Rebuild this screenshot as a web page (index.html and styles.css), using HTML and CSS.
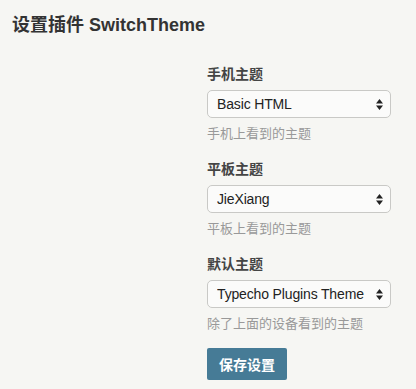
FILE: index.html
```html
<!DOCTYPE html>
<html lang="zh-CN">
<head>
<meta charset="utf-8">
<title>设置插件 SwitchTheme</title>
<link rel="stylesheet" href="styles.css">
</head>
<body>
<div class="page">
  <h2 class="page-title">设置插件 SwitchTheme</h2>
  <form class="options">
    <div class="option">
      <label class="option-label" for="mobile">手机主题</label>
      <div class="select-wrap">
        <select id="mobile" class="select"><option>Basic HTML</option></select>
        <svg class="select-arrows" width="7" height="11" viewBox="0 0 7 11"><path d="M0 4.5 L3.5 0 L7 4.5 Z M0 6.5 L7 6.5 L3.5 11 Z"/></svg>
      </div>
      <p class="description">手机上看到的主题</p>
    </div>
    <div class="option">
      <label class="option-label" for="tablet">平板主题</label>
      <div class="select-wrap">
        <select id="tablet" class="select"><option>JieXiang</option></select>
        <svg class="select-arrows" width="7" height="11" viewBox="0 0 7 11"><path d="M0 4.5 L3.5 0 L7 4.5 Z M0 6.5 L7 6.5 L3.5 11 Z"/></svg>
      </div>
      <p class="description">平板上看到的主题</p>
    </div>
    <div class="option">
      <label class="option-label" for="default">默认主题</label>
      <div class="select-wrap">
        <select id="default" class="select"><option>Typecho Plugins Theme</option></select>
        <svg class="select-arrows" width="7" height="11" viewBox="0 0 7 11"><path d="M0 4.5 L3.5 0 L7 4.5 Z M0 6.5 L7 6.5 L3.5 11 Z"/></svg>
      </div>
      <p class="description">除了上面的设备看到的主题</p>
    </div>
    <div class="submit-row">
      <button type="button" class="btn-primary">保存设置</button>
    </div>
  </form>
</div>
</body>
</html>
```

FILE: styles.css
```css
html, body {
  margin: 0;
  padding: 0;
}
body {
  background: #F6F6F3;
  color: #444;
  font-family: "Liberation Sans", "Noto Sans CJK SC", sans-serif;
  font-size: 14px;
}
.page {
  padding: 12px 12px 0 12px;
}
.page-title {
  margin: 0;
  font-size: 18px;
  line-height: 26px;
  font-weight: bold;
  color: #333;
}
.options {
  margin: 26px 0 0 195px;
  width: 184px;
}
.option {
  margin-bottom: 15px;
}
.option-label {
  display: block;
  font-size: 14px;
  line-height: 20px;
  font-weight: bold;
  color: #444;
  margin-bottom: 6px;
}
.select-wrap {
  position: relative;
  height: 28px;
}
.select {
  -webkit-appearance: none;
  appearance: none;
  box-sizing: border-box;
  width: 184px;
  height: 28px;
  margin: 0;
  padding: 0 18px 0 9px;
  border: 1px solid #C9C9C6;
  border-radius: 5px;
  background: #FBFBFA;
  color: #222;
  font-family: "Liberation Sans", "Noto Sans CJK SC", sans-serif;
  font-size: 14px;
  letter-spacing: -0.15px;
  line-height: 26px;
}
.select-arrows {
  position: absolute;
  right: 8px;
  top: 9px;
  fill: #222;
  pointer-events: none;
}
.description {
  margin: 6px 0 0 0;
  font-size: 13px;
  line-height: 20px;
  color: #999;
}
.submit-row {
  margin-top: -1px;
}
.btn-primary {
  box-sizing: border-box;
  height: 32px;
  padding: 0 12px;
  border: none;
  border-radius: 2px;
  background: #467B96;
  color: #fff;
  font-family: "Liberation Sans", "Noto Sans CJK SC", sans-serif;
  font-size: 14px;
  font-weight: bold;
}
```
